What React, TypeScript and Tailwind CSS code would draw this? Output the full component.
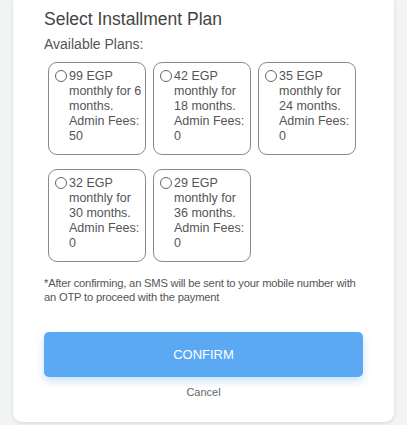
import React, { useState } from "react";

const plans = [
  { amount: 99, months: 6, fees: 50 },
  { amount: 42, months: 18, fees: 0 },
  { amount: 35, months: 24, fees: 0 },
  { amount: 32, months: 30, fees: 0 },
  { amount: 29, months: 36, fees: 0 },
];

export default function App() {
  const [selected, setSelected] = useState<number | null>(null);

  return (
    <div className="min-h-[425px] w-[407px] bg-[#f3f4f6] px-[13px] pb-[3px]" style={{ fontFamily: '"Liberation Sans", Arial, sans-serif' }}>
      <div className="rounded-b-[9px] bg-white pl-[31px] pr-[31px] pt-[9px] pb-[23px] shadow-[0_1px_4px_rgba(0,0,0,0.12)]">
        <h2 className="text-[17.5px] leading-[21px] text-[#444]">Select Installment Plan</h2>
        <p className="mt-[6px] text-[14px] leading-[16px] text-[#555]">Available Plans:</p>

        <div className="ml-[4px] mt-[10px] grid w-[308px] grid-cols-[98px_98px_98px] gap-x-[7px] gap-y-[14px]">
          {plans.map((p, i) => (
            <label
              key={i}
              onClick={() => setSelected(i)}
              className="flex h-[93px] cursor-pointer items-start gap-[2px] rounded-[9px] border border-[#8a8a8a] pl-[6px] pt-[6px]"
            >
              <span className="mt-[1px] flex h-[12px] w-[12px] shrink-0 items-center justify-center rounded-full border border-[#666] bg-white">
                {selected === i && <span className="h-[6px] w-[6px] rounded-full bg-[#555]" />}
              </span>
              <span className="w-[74px] text-[12.5px] leading-[15px] text-[#555]">
                {p.amount} EGP monthly for {p.months} months. Admin Fees: {p.fees}
              </span>
            </label>
          ))}
        </div>

        <p className="mt-[14px] text-[11.2px] leading-[14px] tracking-[-0.2px] text-[#555]">
          *After confirming, an SMS will be sent to your mobile number with an OTP to proceed with the payment
        </p>

        <button className="mt-[28px] flex h-[45px] w-full items-center justify-center rounded-[5px] bg-[#5ba9f2] text-[13px] text-white shadow-[0_4px_8px_rgba(91,169,242,0.35)]">
          CONFIRM
        </button>
        <div className="mt-[9px] text-center text-[11px] leading-[13px] text-[#666]">Cancel</div>
      </div>
    </div>
  );
}
